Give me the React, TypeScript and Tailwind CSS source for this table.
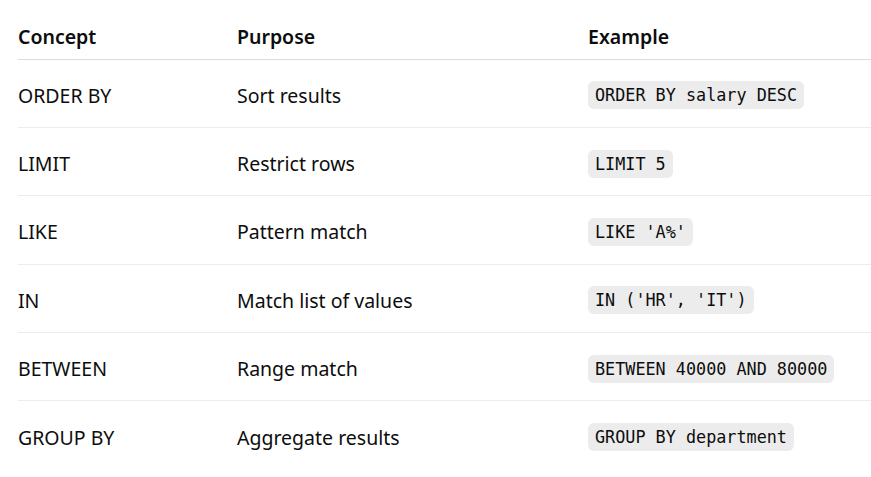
import React from 'react';

const rows = [
  { concept: 'ORDER BY', purpose: 'Sort results', example: 'ORDER BY salary DESC' },
  { concept: 'LIMIT', purpose: 'Restrict rows', example: 'LIMIT 5' },
  { concept: 'LIKE', purpose: 'Pattern match', example: "LIKE 'A%'" },
  { concept: 'IN', purpose: 'Match list of values', example: "IN ('HR', 'IT')" },
  { concept: 'BETWEEN', purpose: 'Range match', example: 'BETWEEN 40000 AND 80000' },
  { concept: 'GROUP BY', purpose: 'Aggregate results', example: 'GROUP BY department' },
];

const App = () => {
  return (
    <div className="w-[871px] h-[477px] bg-white pl-[18px] overflow-hidden font-['Noto_Sans',sans-serif] text-[#0d0d0d]">
      <table className="w-[853px] border-collapse text-left">
        <thead>
          <tr className="h-[59px] border-b border-[#dcdcdc]">
            <th className="w-[219px] pt-[14px] text-[19.5px] font-semibold">Concept</th>
            <th className="w-[351px] pt-[14px] text-[19.5px] font-semibold">Purpose</th>
            <th className="pt-[14px] text-[19.5px] font-semibold">Example</th>
          </tr>
        </thead>
        <tbody>
          {rows.map((row, index) => (
            <tr
              key={index}
              className={index < rows.length - 1 ? 'h-[68.4px] border-b border-[#ececec]' : 'h-[68.4px]'}
            >
              <td className="pt-[4px] text-[19.5px]">{row.concept}</td>
              <td className="pt-[4px] text-[19.5px]">{row.purpose}</td>
              <td className="pt-[4px]">
                <code className="inline-block rounded-[6px] bg-[#ececec] px-[7px] h-[28px] leading-[28px] font-['DejaVu_Sans_Mono',monospace] text-[16.8px] whitespace-pre">
                  {row.example}
                </code>
              </td>
            </tr>
          ))}
        </tbody>
      </table>
    </div>
  );
};

export default App;
